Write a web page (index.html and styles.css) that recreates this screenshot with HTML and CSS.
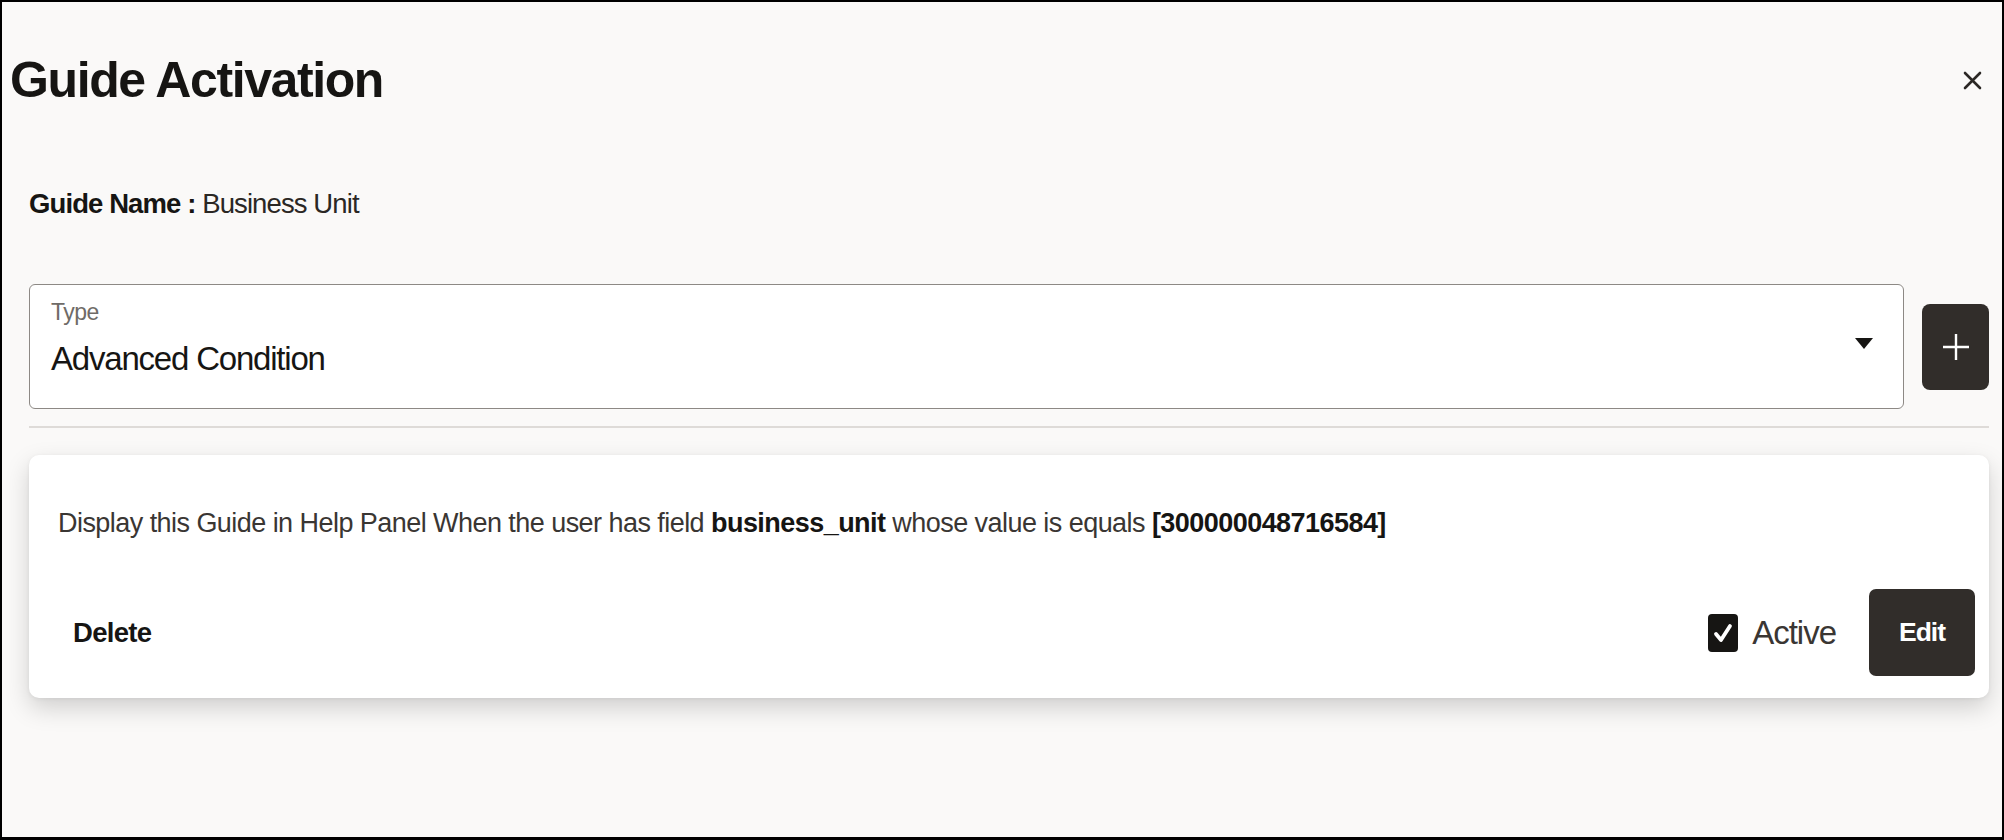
FILE: index.html
```html
<!DOCTYPE html>
<html lang="en">
<head>
<meta charset="utf-8">
<title>Guide Activation</title>
<link rel="stylesheet" href="styles.css">
</head>
<body>
<div class="frame">
  <header class="head">
    <h1 class="title">Guide Activation</h1>
    <button class="close" aria-label="Close">
      <svg width="19" height="19" viewBox="0 0 19 19"><path d="M2 2 L17 17 M17 2 L2 17" stroke="#2b2825" stroke-width="2.6" stroke-linecap="round"/></svg>
    </button>
  </header>
  <main class="body">
    <div class="name"><span class="name-key">Guide Name :</span> Business Unit</div>
    <div class="type-row">
      <div class="select">
        <div class="select-text">
          <span class="label">Type</span>
          <span class="value">Advanced Condition</span>
        </div>
        <svg class="caret" width="18" height="11" viewBox="0 0 18 11"><polygon points="0,0 18,0 9,11" fill="#161513"/></svg>
      </div>
      <button class="add" aria-label="Add">
        <svg width="28" height="28" viewBox="0 0 28 28"><path d="M14 1 V27 M1 14 H27" stroke="#ffffff" stroke-width="2.4"/></svg>
      </button>
    </div>
    <div class="sep"></div>
    <section class="card">
      <p class="rule">Display this Guide in Help Panel When the user has field <b>business_unit</b> whose value is equals <b>[300000048716584]</b></p>
      <div class="card-foot">
        <button class="delete">Delete</button>
        <div class="actions">
          <label class="check">
            <span class="box"><svg width="22" height="24" viewBox="0 0 22 24"><path d="M4 13 L9 19 L18 5" fill="none" stroke="#ffffff" stroke-width="3.8" stroke-linecap="round" stroke-linejoin="round"/></svg></span>
            <span class="check-text">Active</span>
          </label>
          <button class="edit">Edit</button>
        </div>
      </div>
    </section>
  </main>
</div>
</body>
</html>
```

FILE: styles.css
```css
html, body {
  margin: 0;
  padding: 0;
}

body {
  background: #000;
  font-family: "Liberation Sans", Arial, sans-serif;
  color: #161513;
}

.frame {
  box-sizing: border-box;
  width: 2004px;
  height: 840px;
  border-style: solid;
  border-color: #000;
  border-width: 2px 2px 3px 2px;
  background: #faf9f8;
  padding: 50px 13px 0 8px;
}

.head {
  display: flex;
  justify-content: space-between;
  align-items: center;
}

.title {
  margin: 0;
  font-size: 50px;
  line-height: 56px;
  font-weight: 700;
  letter-spacing: -1.4px;
  color: #161513;
}

.close {
  border: 0;
  background: none;
  padding: 0;
  margin-right: 7px;
  width: 19px;
  height: 19px;
  display: flex;
}

.body {
  padding-left: 19px;
}

.name {
  margin-top: 80px;
  font-size: 27.5px;
  line-height: 31px;
  letter-spacing: -0.9px;
  color: #2a2724;
}

.name-key {
  font-weight: 700;
  color: #161513;
}

.type-row {
  margin-top: 65px;
  display: flex;
  align-items: center;
  gap: 18px;
}

.select {
  flex: 1;
  box-sizing: border-box;
  height: 125px;
  background: #fff;
  border: 1px solid #8d8985;
  border-radius: 6px;
  display: flex;
  align-items: center;
  padding: 0 30px 0 21px;
}

.select-text {
  flex: 1;
  display: flex;
  flex-direction: column;
  gap: 16px;
  align-self: flex-start;
  padding-top: 15px;
}

.label {
  font-size: 23px;
  line-height: 24px;
  letter-spacing: -0.5px;
  color: #6f6b67;
}

.value {
  font-size: 33px;
  line-height: 37px;
  letter-spacing: -1.2px;
  color: #161513;
}

.caret {
  display: block;
  margin-top: -6px;
}

.add {
  width: 67px;
  height: 86px;
  border: 0;
  border-radius: 8px;
  background: #312d2a;
  display: flex;
  align-items: center;
  justify-content: center;
  padding: 0;
}

.sep {
  margin-top: 17px;
  height: 2px;
  background: #dedbd8;
}

.card {
  margin-top: 27px;
  box-sizing: border-box;
  height: 243px;
  background: #fff;
  border-radius: 10px;
  box-shadow: 0 10px 24px rgba(0, 0, 0, 0.17), 0 1px 4px rgba(0, 0, 0, 0.06);
  padding: 53px 14px 22px 29px;
  display: flex;
  flex-direction: column;
}

.rule {
  margin: 0;
  font-size: 27px;
  line-height: 30px;
  letter-spacing: -0.55px;
  color: #3a3633;
}

.rule b {
  color: #161513;
}

.card-foot {
  margin-top: auto;
  display: flex;
  align-items: center;
  justify-content: space-between;
}

.delete {
  border: 0;
  background: none;
  padding: 0 15px;
  font-family: inherit;
  font-size: 27.5px;
  font-weight: 700;
  letter-spacing: -0.7px;
  color: #161513;
}

.actions {
  display: flex;
  align-items: center;
}

.check {
  display: flex;
  align-items: center;
  gap: 14px;
  margin-right: 33px;
}

.box {
  width: 30px;
  height: 38px;
  border-radius: 4px;
  background: #161513;
  display: flex;
  align-items: center;
  justify-content: center;
}

.check-text {
  font-size: 33px;
  line-height: 37px;
  letter-spacing: -1px;
  color: #3a3633;
}

.edit {
  width: 106px;
  height: 87px;
  border: 0;
  border-radius: 7px;
  background: #312d2a;
  color: #fff;
  font-family: inherit;
  font-size: 26.5px;
  font-weight: 700;
  letter-spacing: -1px;
  padding: 0;
}
```
